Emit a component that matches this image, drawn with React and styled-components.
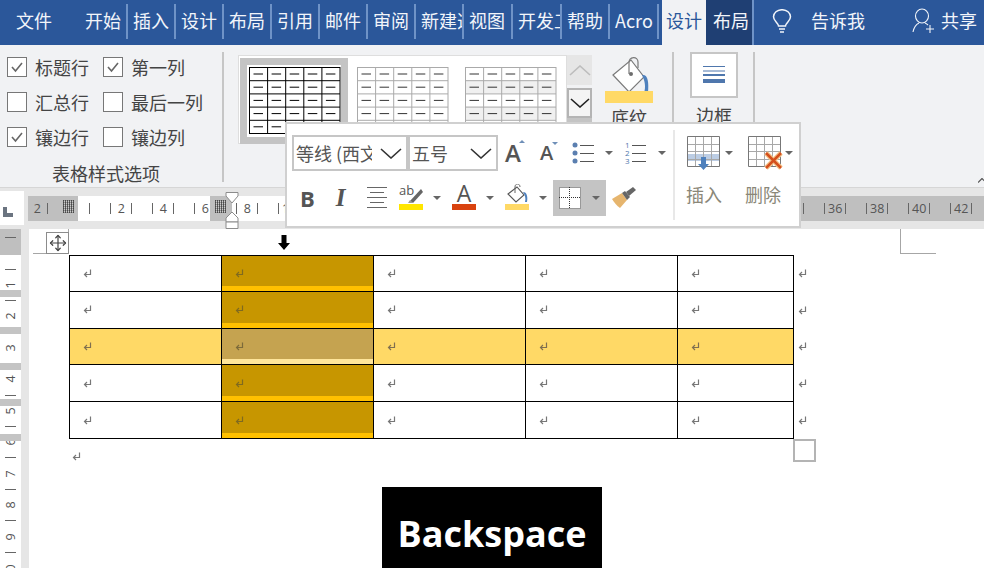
import React from 'react';
import styled, { createGlobalStyle } from 'styled-components';
import { Move } from 'lucide-react';

const cjk = '"Noto Sans CJK SC", "Noto Sans", sans-serif';
const latin = '"Open Sans", "Noto Sans CJK SC", sans-serif';

const GlobalStyle = createGlobalStyle`
  html, body {
    margin: 0;
    padding: 0;
    background: #fff;
    overflow: hidden;
  }
  * { box-sizing: border-box; }
`;

const Window = styled.div`
  position: relative;
  width: 984px;
  height: 568px;
  overflow: hidden;
  display: flex;
  flex-direction: column;
  font-family: ${cjk};
  color: #444;
`;

/* ---------- title tabs ---------- */
const TabBar = styled.div`
  height: 45px;
  flex: none;
  display: flex;
  background: #2b579a;
  color: #f2f5fa;
  font-size: 18px;
`;
const FileTab = styled.div`
  width: 80px;
  padding-left: 16px;
  line-height: 41px;
`;
const Tab = styled.div`
  width: ${(p) => p.$w || 48}px;
  padding-top: 4px;
  height: 39px;
`;
const TabLabel = styled.div`
  height: 35px;
  line-height: 33px;
  white-space: nowrap;
  overflow: hidden;
  border-right: 2px solid #6f93c7;
  padding-left: 5px;
`;
const ActiveTab = styled.div`
  width: 44px;
  margin-left: 3px;
  padding-left: 4px;
  line-height: 41px;
  background: #f1f2f4;
  color: #2b579a;
`;
const DarkTab = styled.div`
  width: 48px;
  padding-left: 7px;
  line-height: 41px;
  background: #1f3f73;
  border-right: 2px solid #6f93c7;
`;
const TellMe = styled.div`
  display: flex;
  align-items: flex-start;
  padding: 8px 0 0 18px;
  line-height: 24px;
  width: 158px;
  gap: 19px;
`;
const Share = styled.div`
  display: flex;
  align-items: flex-start;
  gap: 6px;
  padding-top: 8px;
  line-height: 24px;
`;

/* ---------- ribbon ---------- */
const Ribbon = styled.div`
  height: 143px;
  flex: none;
  display: flex;
  padding-top: 7px;
  background: #f1f2f4;
  border-bottom: 1px solid #d6d6d6;
`;
const OptionsGroup = styled.div`
  width: 224px;
  height: 130px;
  border-right: 2px solid #c6c6c6;
  display: flex;
  flex-direction: column;
  padding: 5px 0 0 7px;
`;
const OptionGrid = styled.div`
  display: grid;
  grid-template-columns: 96px 1fr;
  grid-auto-rows: 35px;
  font-size: 18px;
`;
const Option = styled.div`
  display: flex;
  align-items: center;
  gap: 8px;
  height: 20px;
  line-height: 20px;
  white-space: nowrap;
`;
const Box = styled.div`
  width: 20px;
  height: 20px;
  background: #fff;
  border: 1px solid #777;
  display: flex;
  align-items: center;
  justify-content: center;
`;
const GroupTitle = styled.div`
  font-size: 18px;
  line-height: 22px;
  margin: 0 0 0 45px;
`;
const Gallery = styled.div`
  margin: 3px 0 0 14px;
  width: 329px;
  height: 89px;
  background: #fff;
  border: 1px solid #dedede;
  display: flex;
  padding: 2px 0 0 1px;
`;
const Thumb = styled.div`
  width: 108px;
  height: 86px;
  padding: ${(p) => (p.$on ? '2px' : '9px')} 0 0 ${(p) => (p.$on ? '2px' : '9px')};
  border: ${(p) => (p.$on ? '7px solid #c4c4c4' : 'none')};
`;
const Spinner = styled.div`
  width: 25px;
  margin-top: 3px;
  display: flex;
  flex-direction: column;
`;
const SpinUp = styled.div`
  height: 30px;
  background: #e6e6e6;
  display: flex;
  align-items: center;
  justify-content: center;
`;
const SpinDown = styled.div`
  height: 30px;
  margin-top: 3px;
  background: #f4f4f4;
  border: 2px solid #b4b4b4;
  display: flex;
  align-items: center;
  justify-content: center;
`;
const SpinMore = styled.div`
  height: 8px;
  background: #c4c4c4;
  border-bottom: 2px solid #666;
`;
const ShadingTool = styled.div`
  width: 48px;
  margin-left: 13px;
  padding-top: 5px;
  display: flex;
  flex-direction: column;
  align-items: center;
  font-size: 18px;
`;
const ShadingBar = styled.div`
  width: 48px;
  height: 12px;
  margin-top: -2px;
  background: #ffd966;
`;
const ToolLabel = styled.div`
  line-height: 24px;
  margin-top: ${(p) => p.$mt || 0}px;
  white-space: nowrap;
`;
const Divider = styled.div`
  width: 2px;
  height: 130px;
  background: #c6c6c6;
  margin-left: ${(p) => p.$ml}px;
`;
const BorderTool = styled.div`
  margin-left: 16px;
  width: 48px;
  display: flex;
  flex-direction: column;
  align-items: center;
  font-size: 18px;
`;
const BorderButton = styled.div`
  width: 48px;
  height: 46px;
  background: #fff;
  border: 2px solid #c6c6c6;
  display: flex;
  align-items: center;
  justify-content: center;
`;
const CollapseMark = styled.svg`
  position: absolute;
  right: 0;
  top: 178px;
`;

/* ---------- horizontal ruler ---------- */
const RulerRow = styled.div`
  height: 41px;
  flex: none;
  display: flex;
  align-items: center;
  background: #e6e6e6;
  padding: 0 0 1px 0;
`;
const RulerCorner = styled.div`
  width: 24px;
  height: 34px;
  background: #fff;
  display: flex;
  align-items: center;
  padding: 8px 0 0 3px;
`;
const HRuler = styled.div`
  margin-left: 4px;
  flex: 1;
  height: 25px;
  display: flex;
  padding-left: 4px;
  overflow: hidden;
  background: linear-gradient(
    to right,
    #bfbfbf 50px,
    #fff 50px,
    #fff 182px,
    #bfbfbf 182px,
    #bfbfbf 204px,
    #fff 204px,
    #fff 772px,
    #bfbfbf 772px
  );
`;
const HCell = styled.div`
  width: 10.5px;
  flex: none;
  display: flex;
  align-items: center;
  justify-content: center;
  font: 12.5px/25px ${latin};
  color: #555;
`;
const HTick = styled.div`
  width: 1px;
  height: 11px;
  background: #666;
`;
const Gutter = styled.div`
  position: absolute;
  top: 200px;
  left: ${(p) => p.$x}px;
  width: 11px;
  height: 13px;
  background:
    repeating-linear-gradient(to right, #777 0 1px, transparent 1px 2px),
    repeating-linear-gradient(to bottom, #999 0 1px, #ccc 1px 2px);
  background-blend-mode: multiply;
`;
const IndentMark = styled.svg`
  position: absolute;
  left: 225px;
  top: 192px;
`;

/* ---------- document ---------- */
const DocRow = styled.div`
  flex: 1;
  display: flex;
  min-height: 0;
`;
const VRuler = styled.div`
  position: relative;
  width: 21px;
  flex: none;
  padding-top: 1px;
  background: #fff;
  overflow: hidden;
`;
const VMargin = styled.div`
  height: 26px;
  position: absolute;
  inset: 0 0 auto 0;
  background: #bfbfbf;
`;
const VCell = styled.div`
  position: relative;
  height: 15.72px;
  display: flex;
  align-items: center;
  justify-content: center;
`;
const VTick = styled.div`
  width: 11px;
  height: 1px;
  background: #666;
`;
const VNum = styled.div`
  transform: rotate(-90deg);
  font: 12.5px/14px ${latin};
  color: #555;
`;
const RowBand = styled.div`
  position: absolute;
  left: 0;
  right: 0;
  top: ${(p) => p.$y}px;
  height: 7px;
  background: #c4c4c4;
`;
const VGutter = styled.div`
  width: 8px;
  flex: none;
  background: #e6e6e6;
`;
const Page = styled.div`
  flex: 1;
  background: #fff;
`;
const CropRow = styled.div`
  height: 26px;
  width: 907px;
  padding-left: 4px;
  display: flex;
  justify-content: space-between;
`;
const Crop = styled.div`
  width: 36px;
  height: 25px;
  border-bottom: 1px solid #a6a6a6;
  ${(p) => (p.$side === 'left' ? 'border-right' : 'border-left')}: 1px solid #a6a6a6;
`;
const DocTable = styled.div`
  margin-left: 40px;
  width: 760px;
`;
const TableRow = styled.div`
  display: flex;
  height: 36.8px;
`;
const Cell = styled.div`
  width: ${(p) => p.$w + (p.$first ? 1 : 0)}px;
  padding-left: 13px;
  display: flex;
  align-items: center;
  border-right: 1px solid #000;
  border-bottom: 1px solid #000;
  ${(p) => p.$first && 'border-left: 1px solid #000;'}
  ${(p) => p.$top && 'border-top: 1px solid #000;'}
  background: ${(p) => p.$bg};
  box-shadow: ${(p) => (p.$stripe ? `inset 0 -5px 0 ${p.$stripe}` : 'none')};
`;
const RowEnd = styled.div`
  padding-left: 4px;
  display: flex;
  align-items: center;
`;
const TailMark = styled.div`
  margin: 13px 0 0 43px;
  display: flex;
`;

/* ---------- things lying over the page ---------- */
const MoveHandle = styled.div`
  position: absolute;
  left: 46px;
  top: 232px;
  width: 23px;
  height: 22px;
  background: #fff;
  border: 1px solid #8c8c8c;
  display: flex;
  align-items: center;
  justify-content: center;
  color: #444;
`;
const ColumnCursor = styled.svg`
  position: absolute;
  left: 278px;
  top: 235px;
`;
const ResizeHandle = styled.div`
  position: absolute;
  left: 793px;
  top: 439px;
  width: 23px;
  height: 23px;
  background: #fff;
  border: 2px solid #b4b4b4;
`;
const KeyCaption = styled.div`
  position: absolute;
  left: 382px;
  top: 487px;
  width: 220px;
  height: 81px;
  background: #000;
  color: #fff;
  display: flex;
  align-items: center;
  justify-content: center;
  font: 700 36px/1 ${latin};
  padding-top: 12px;
`;

/* ---------- mini toolbar ---------- */
const MiniBar = styled.div`
  position: absolute;
  left: 285px;
  top: 122px;
  width: 516px;
  height: 106px;
  background: #fff;
  border: 2px solid #d0d0d0;
  display: flex;
`;
const MiniMain = styled.div`
  width: 386px;
  flex: none;
  padding: 11px 0 0 5px;
  display: flex;
  flex-direction: column;
  gap: 9px;
`;
const MiniRow = styled.div`
  display: flex;
  align-items: center;
  height: 36px;
`;
const Select = styled.div`
  width: ${(p) => p.$w}px;
  height: 36px;
  border: 2px solid #c6c6c6;
  display: flex;
  align-items: center;
  justify-content: space-between;
  padding: 0 4px 0 2px;
  font-size: 18px;
  color: #555;
`;
const SelectText = styled.div`
  width: 76px;
  white-space: nowrap;
  overflow: hidden;
  line-height: 30px;
`;
const FontA = styled.div`
  position: relative;
  font: 600 ${(p) => p.$size}px/1 ${latin};
  color: #555;
  margin-left: ${(p) => p.$ml}px;
  width: 20px;
`;
const StyleLetter = styled.div`
  font: ${(p) => (p.$italic ? 'italic 700 25px' : '700 22px')}/36px ${(p) => (p.$italic ? '"Liberation Serif", serif' : latin)};
  color: #555;
  margin-left: ${(p) => p.$ml}px;
`;
const SizeCaret = styled.div`
  position: absolute;
  right: ${(p) => p.$r}px;
  top: ${(p) => p.$t}px;
  border-left: 3px solid transparent;
  border-right: 3px solid transparent;
  ${(p) => (p.$up ? 'border-bottom' : 'border-top')}: 3px solid #6f8fb8;
`;
const Caret = styled.div`
  width: 0;
  height: 0;
  margin-left: ${(p) => p.$ml}px;
  border-left: 4px solid transparent;
  border-right: 4px solid transparent;
  border-top: 4px solid #666;
`;
const IconSlot = styled.div`
  display: flex;
  margin-left: ${(p) => p.$ml || 0}px;
  margin-top: ${(p) => p.$mt || 0}px;
`;
const BorderPick = styled.div`
  width: 53px;
  height: 36px;
  margin-left: ${(p) => p.$ml}px;
  background: #c4c4c4;
  display: flex;
  align-items: center;
  padding-left: 6px;
`;
const MiniDivider = styled.div`
  width: 2px;
  flex: none;
  height: 90px;
  margin-top: 6px;
  background: #e8e8e8;
`;
const MiniSide = styled.div`
  flex: 1;
  padding: 11px 0 0 12px;
  display: grid;
  grid-template-columns: 61px 51px;
  grid-template-rows: 35px auto;
  row-gap: 12px;
`;
const SideIcon = styled.div`
  display: flex;
  align-items: center;
`;
const SideLabel = styled.div`
  font-size: 18px;
  line-height: 24px;
  color: #8a8778;
  white-space: nowrap;
  margin-left: ${(p) => p.$ml || 0}px;
`;

/* ---------- drawings ---------- */
const Check = () => (
  <svg width="14" height="12" viewBox="0 0 14 12">
    <path d="M2 6 L5.5 10 L12 2" fill="none" stroke="#666" strokeWidth="1.6" />
  </svg>
);
const Chevron = ({ w = 22, h = 11, color = '#333', up, sw = 1.6 }) => (
  <svg width={w} height={h} viewBox={`0 0 ${w} ${h}`}>
    <path
      d={up ? `M1 ${h - 1} L${w / 2} 1 L${w - 1} ${h - 1}` : `M1 1 L${w / 2} ${h - 1} L${w - 1} 1`}
      fill="none"
      stroke={color}
      strokeWidth={sw}
    />
  </svg>
);
const Bulb = () => (
  <svg width="20" height="24" viewBox="0 0 20 24" fill="none" stroke="#f2f5fa" strokeWidth="1.5" style={{ marginTop: 1 }}>
    <path d="M6.5 17 C6 13.5 1.5 12 1.5 7.8 A8.4 7 0 0 1 18.5 7.8 C18.5 12 14 13.5 13.5 17 Z" />
    <path d="M7 20 H13 M8 23 H12" />
  </svg>
);
const Person = () => (
  <svg width="23" height="25" viewBox="0 0 23 25" fill="none" stroke="#f2f5fa" strokeWidth="1.1">
    <ellipse cx="10" cy="8" rx="6.5" ry="7" />
    <path d="M1 24 C2 19 4 16.5 7 15 M13 15 C14 15.4 15 16 16 17 M18 17 V25 M14 21 H22" />
  </svg>
);
const ParaMark = ({ color = '#777' }) => (
  <svg width="9" height="9" viewBox="0 0 9 9" fill="none" stroke={color} strokeWidth="1.2">
    <path d="M7.5 0.5 V5.5 H2 M4 3 L1.5 5.5 L4 8" />
  </svg>
);
const ThumbTable = ({ line, dash, band }) => {
  const cols = [0, 1, 2, 3, 4];
  const rows = [0, 1, 2, 3, 4];
  return (
    <svg width="92" height="67" viewBox="0 0 92 67">
      {band && [1, 3].map((r) => <rect key={r} x="0" y={r * 13.2} width="91" height="13.2" fill="#f0f0f0" />)}
      {cols.map((c) =>
        rows.map((r) => (
          <path key={`${c}-${r}`} d={`M${c * 18.1 + 4.5} ${r * 13.2 + 7} h9.5`} stroke={dash} strokeWidth="1" />
        ))
      )}
      {[0, 1, 2, 3, 4, 5].map((c) => (
        <path key={c} d={`M${c * 18.1 + 0.5} 0 V66.5`} stroke={line} strokeWidth="1" />
      ))}
      {[0, 1, 2, 3, 4, 5].map((r) => (
        <path key={r} d={`M0 ${r * 13.2 + 0.5} H91`} stroke={line} strokeWidth="1" />
      ))}
    </svg>
  );
};
const Bucket = () => (
  <svg width="40" height="36" viewBox="0 0 40 36" fill="none" style={{ marginLeft: 6 }}>
    <path d="M1 18 L19 3 L32 20 L17 35 Z" fill="#fff" stroke="#7a7a7a" strokeWidth="1.2" />
    <path d="M17 17 V6 C17 -1 26 -1 26 5 V11" stroke="#7a7a7a" strokeWidth="1.2" />
    <circle cx="19" cy="17" r="2" fill="#6d6d6d" />
    <path d="M30 18 C36 17 37 25 36 36 H32 C34 30 33 24 30 18 Z" fill="#4f81bd" />
  </svg>
);
const LinesIcon = () => (
  <svg width="24" height="20" viewBox="0 0 24 20">
    <path d="M1 1.5 H23 M1 6 H23" stroke="#4f77ad" strokeWidth="1" />
    <path d="M1 10 H23" stroke="#4f77ad" strokeWidth="2" />
    <path d="M1 16 H23" stroke="#4f77ad" strokeWidth="4" />
  </svg>
);
const CornerL = () => (
  <svg width="10" height="10" viewBox="0 0 10 10">
    <path d="M0 0 H4 V6 H10 V10 H0 Z" fill="#6b7480" />
  </svg>
);
const Bullets = () => (
  <svg width="24" height="22" viewBox="0 0 24 22">
    {[3, 11, 19].map((y) => (
      <g key={y}>
        <circle cx="4" cy={y} r="2.5" fill="#5b7fb0" />
        <path d={`M9 ${y + 0.5} H23`} stroke="#555" strokeWidth="1" />
      </g>
    ))}
  </svg>
);
const Numbers = () => (
  <svg width="22" height="24" viewBox="0 0 22 24" fontFamily="'Open Sans', sans-serif" fontSize="8" fill="#4f77ad">
    <text x="0" y="7">1</text>
    <text x="0" y="15">2</text>
    <text x="0" y="23">3</text>
    <path d="M7 4.5 H21 M7 12.5 H21 M7 20.5 H21" stroke="#555" strokeWidth="1" />
  </svg>
);
const AlignLines = () => (
  <svg width="20" height="24" viewBox="0 0 20 24" stroke="#666" strokeWidth="1">
    <path d="M0 1.5 H20 M3 6.5 H17 M0 11.5 H20 M3 16.5 H17 M0 21.5 H20" />
  </svg>
);
const Highlight = () => (
  <svg width="25" height="26" viewBox="0 0 25 26">
    <text x="0" y="11" fontFamily="'Open Sans', sans-serif" fontSize="13" fill="#555">ab</text>
    <path d="M11 17 L22 5 L24 8 L14 19 Z" fill="#666" />
    <path d="M9 19 L11 16 L14 19 Z" fill="#999" />
    <rect x="0" y="20" width="24" height="6" fill="#ffe600" />
  </svg>
);
const FontColor = () => (
  <svg width="25" height="26" viewBox="0 0 25 26">
    <text x="12" y="18" textAnchor="middle" fontFamily="'Open Sans', sans-serif" fontSize="23" fill="#555">A</text>
    <rect x="0" y="20" width="24" height="6" fill="#d9430f" />
  </svg>
);
const SmallBucket = () => (
  <svg width="25" height="26" viewBox="0 0 25 26" fill="none">
    <path d="M3 10 L12 3 L19 11 L11 18 Z" fill="#fff" stroke="#555" strokeWidth="1.1" />
    <path d="M10 9 V3 C10 -1 15 -1 15 3" stroke="#666" strokeWidth="1" />
    <path d="M18 8 C22 8 23 13 22 18 H20 C21 14 20 11 18 8 Z" fill="#4f81bd" />
    <rect x="0" y="20" width="24" height="6" fill="#ffd966" />
  </svg>
);
const GridDots = () => (
  <svg width="22" height="22" viewBox="0 0 22 22">
    <rect width="22" height="22" fill="#fff" />
    <path d="M.5 .5 H21.5 V21.5 H.5 Z M10.5 0 V22 M0 10.5 H22" fill="none" stroke="#333" strokeWidth="1" strokeDasharray="1 1" />
  </svg>
);
const Brush = () => (
  <svg width="25" height="22" viewBox="0 0 25 22">
    <path d="M1 12 L11 6 L16 13 L9 21 C6 19 3 15 1 12 Z" fill="#e6b56e" />
    <path d="M11 6 L14 4 L19 10 L16 13 Z" fill="#666" />
    <path d="M15 5 L22 0 L25 3 L18 9 Z" fill="#666" />
  </svg>
);
const GridLines = () => (
  <>
    <path d="M.5 .5 H32.5 V30.5 H.5 Z" stroke="#777" strokeWidth="1" />
    <path d="M8.5 1 V30 M16.5 1 V30 M24.5 1 V30 M1 8.5 H32 M1 15.5 H32 M1 23.5 H32" stroke="#a8a8a8" strokeWidth="1" />
  </>
);
const InsertIcon = () => (
  <svg width="34" height="34" viewBox="0 0 34 34" fill="none">
    <rect x="1" y="18" width="31" height="7" fill="#bccde4" />
    <GridLines />
    <path d="M14 21 H19 V28 H22 L16.5 34 L11 28 H14 Z" fill="#4f81bd" />
  </svg>
);
const DeleteIcon = () => (
  <svg width="36" height="34" viewBox="0 0 36 34" fill="none">
    <GridLines />
    <path d="M18 17 L33 32 M33 17 L18 32" stroke="#f4c48a" strokeWidth="5" />
    <path d="M18 17 L33 32 M33 17 L18 32" stroke="#d5501d" strokeWidth="2.5" />
  </svg>
);

/* ---------- data ---------- */
const tabs = [
  ['开始', 48],
  ['插入', 48],
  ['设计', 48],
  ['布局', 48],
  ['引用', 48],
  ['邮件', 48],
  ['审阅', 48],
  ['新建选项卡', 48],
  ['视图', 49],
  ['开发工具', 49],
  ['帮助', 48],
  ['Acro', 49],
];
const options = [
  ['标题行', true],
  ['第一列', true],
  ['汇总行', false],
  ['最后一列', false],
  ['镶边行', true],
  ['镶边列', false],
];
const hRuler = Array.from({ length: 91 }, (_, i) => {
  if (i === 3 || i === 17) return null;
  if (i % 2 === 1) return 'tick';
  if (i === 0) return '2';
  if (i % 4 === 0 && i !== 4) return String(((i - 4) / 4) * 2);
  return null;
});
const vRuler = ['tick', null, 'tick', '1', 'tick', '2', null, '3', null, '4', 'tick', '5', 'tick', '6', 'tick', '7', 'tick', '8', 'tick', '9', 'tick', '0'];
const rowBands = [61, 98, 134, 170, 205];
const colWidths = [152, 152, 152, 152, 116];
const tableRows = [0, 1, 2, 3, 4];

const cellStyle = (row, col) => {
  if (row === 2) {
    return col === 1
      ? { bg: '#c5a350', stripe: '#ffe59a', mark: '#7c6a3a' }
      : { bg: '#ffd966', stripe: null, mark: '#807050' };
  }
  return col === 1
    ? { bg: '#c79600', stripe: '#ffc000', mark: '#7f6a20' }
    : { bg: '#fff', stripe: null, mark: '#777' };
};

const App = () => (
  <Window>
    <GlobalStyle />
    <TabBar>
      <FileTab>文件</FileTab>
      {tabs.map(([name, w]) => (
        <Tab key={name} $w={w}>
          <TabLabel>{name}</TabLabel>
        </Tab>
      ))}
      <ActiveTab>设计</ActiveTab>
      <DarkTab>布局</DarkTab>
      <TellMe>
        <Bulb />
        告诉我
      </TellMe>
      <Share>
        <Person />
        共享
      </Share>
    </TabBar>

    <Ribbon>
      <OptionsGroup>
        <OptionGrid>
          {options.map(([label, on]) => (
            <Option key={label}>
              <Box>{on && <Check />}</Box>
              {label}
            </Option>
          ))}
        </OptionGrid>
        <GroupTitle>表格样式选项</GroupTitle>
      </OptionsGroup>
      <Gallery>
        <Thumb $on>
          <ThumbTable line="#000" dash="#000" />
        </Thumb>
        <Thumb>
          <ThumbTable line="#aaa" dash="#333" />
        </Thumb>
        <Thumb>
          <ThumbTable line="#aaa" dash="#333" band />
        </Thumb>
      </Gallery>
      <Spinner>
        <SpinUp>
          <Chevron w={22} h={11} color="#bdbdbd" up />
        </SpinUp>
        <SpinDown>
          <Chevron w={20} h={10} color="#222" />
        </SpinDown>
        <SpinMore />
      </Spinner>
      <ShadingTool>
        <Bucket />
        <ShadingBar />
        <ToolLabel $mt={2}>底纹</ToolLabel>
      </ShadingTool>
      <Divider $ml={19} />
      <BorderTool>
        <BorderButton>
          <LinesIcon />
        </BorderButton>
        <ToolLabel $mt={5}>边框</ToolLabel>
      </BorderTool>
      <Divider $ml={15} />
    </Ribbon>

    <RulerRow>
      <RulerCorner>
        <CornerL />
      </RulerCorner>
      <HRuler>
        {hRuler.map((mark, i) => (
          <HCell key={i}>{mark === 'tick' ? <HTick /> : mark}</HCell>
        ))}
      </HRuler>
    </RulerRow>

    <DocRow>
      <VRuler>
        <VMargin />
        {vRuler.map((mark, i) => (
          <VCell key={i}>{mark === 'tick' ? <VTick /> : mark && <VNum>{mark}</VNum>}</VCell>
        ))}
        {rowBands.map((y) => (
          <RowBand key={y} $y={y} />
        ))}
      </VRuler>
      <VGutter />
      <Page>
        <CropRow>
          <Crop $side="left" />
          <Crop $side="right" />
        </CropRow>
        <DocTable>
          {tableRows.map((row) => (
            <TableRow key={row}>
              {colWidths.map((w, col) => {
                const s = cellStyle(row, col);
                return (
                  <Cell key={col} $w={w} $first={col === 0} $top={row === 0} $bg={s.bg} $stripe={s.stripe}>
                    <ParaMark color={s.mark} />
                  </Cell>
                );
              })}
              <RowEnd>
                <ParaMark />
              </RowEnd>
            </TableRow>
          ))}
        </DocTable>
        <TailMark>
          <ParaMark />
        </TailMark>
      </Page>
    </DocRow>

    <CollapseMark width="6" height="5" viewBox="0 0 6 5">
      <path d="M0 4.5 L4 .5 L8 4.5" fill="none" stroke="#555" strokeWidth="1.2" />
    </CollapseMark>
    <Gutter $x={63} />
    <Gutter $x={215} />
    <IndentMark width="14" height="37" viewBox="0 0 14 37" fill="#fff" stroke="#8c8c8c">
      <path d="M1 .5 H13 V4 L7 11 L1 4 Z" />
      <path d="M7 20 L13 26 V30 H1 V26 Z" />
      <path d="M1 30 H13 V36.5 H1 Z" />
    </IndentMark>
    <MoveHandle>
      <Move size={18} strokeWidth={1.6} />
    </MoveHandle>
    <ColumnCursor width="12" height="15" viewBox="0 0 12 15">
      <path d="M3.5 0 H8.5 V8 H12 L6 15 L0 8 H3.5 Z" fill="#000" />
    </ColumnCursor>
    <ResizeHandle />
    <KeyCaption>Backspace</KeyCaption>

    <MiniBar>
      <MiniMain>
        <MiniRow>
          <Select $w={116}>
            <SelectText>等线 (西文正文)</SelectText>
            <Chevron />
          </Select>
          <Select $w={90}>
            五号
            <Chevron />
          </Select>
          <FontA $size={24} $ml={7}>
            A
            <SizeCaret $r={0} $t={-1} $up />
          </FontA>
          <FontA $size={20} $ml={15}>
            A
            <SizeCaret $r={2} $t={-1} />
          </FontA>
          <IconSlot $ml={11}>
            <Bullets />
          </IconSlot>
          <Caret $ml={10} />
          <IconSlot $ml={12}>
            <Numbers />
          </IconSlot>
          <Caret $ml={11} />
        </MiniRow>
        <MiniRow>
          <StyleLetter $ml={8}>B</StyleLetter>
          <StyleLetter $italic $ml={21}>I</StyleLetter>
          <IconSlot $ml={21}>
            <AlignLines />
          </IconSlot>
          <IconSlot $ml={12} $mt={-3}>
            <Highlight />
          </IconSlot>
          <Caret $ml={9} />
          <IconSlot $ml={11} $mt={-3}>
            <FontColor />
          </IconSlot>
          <Caret $ml={9} />
          <IconSlot $ml={11} $mt={-3}>
            <SmallBucket />
          </IconSlot>
          <Caret $ml={9} />
          <BorderPick $ml={6}>
            <GridDots />
            <Caret $ml={11} />
          </BorderPick>
          <IconSlot $ml={5}>
            <Brush />
          </IconSlot>
        </MiniRow>
      </MiniMain>
      <MiniDivider />
      <MiniSide>
        <SideIcon>
          <InsertIcon />
          <Caret $ml={4} />
        </SideIcon>
        <SideIcon>
          <DeleteIcon />
          <Caret $ml={1} />
        </SideIcon>
        <SideLabel $ml={-1}>插入</SideLabel>
        <SideLabel $ml={-3}>删除</SideLabel>
      </MiniSide>
    </MiniBar>
  </Window>
);

export default App;
